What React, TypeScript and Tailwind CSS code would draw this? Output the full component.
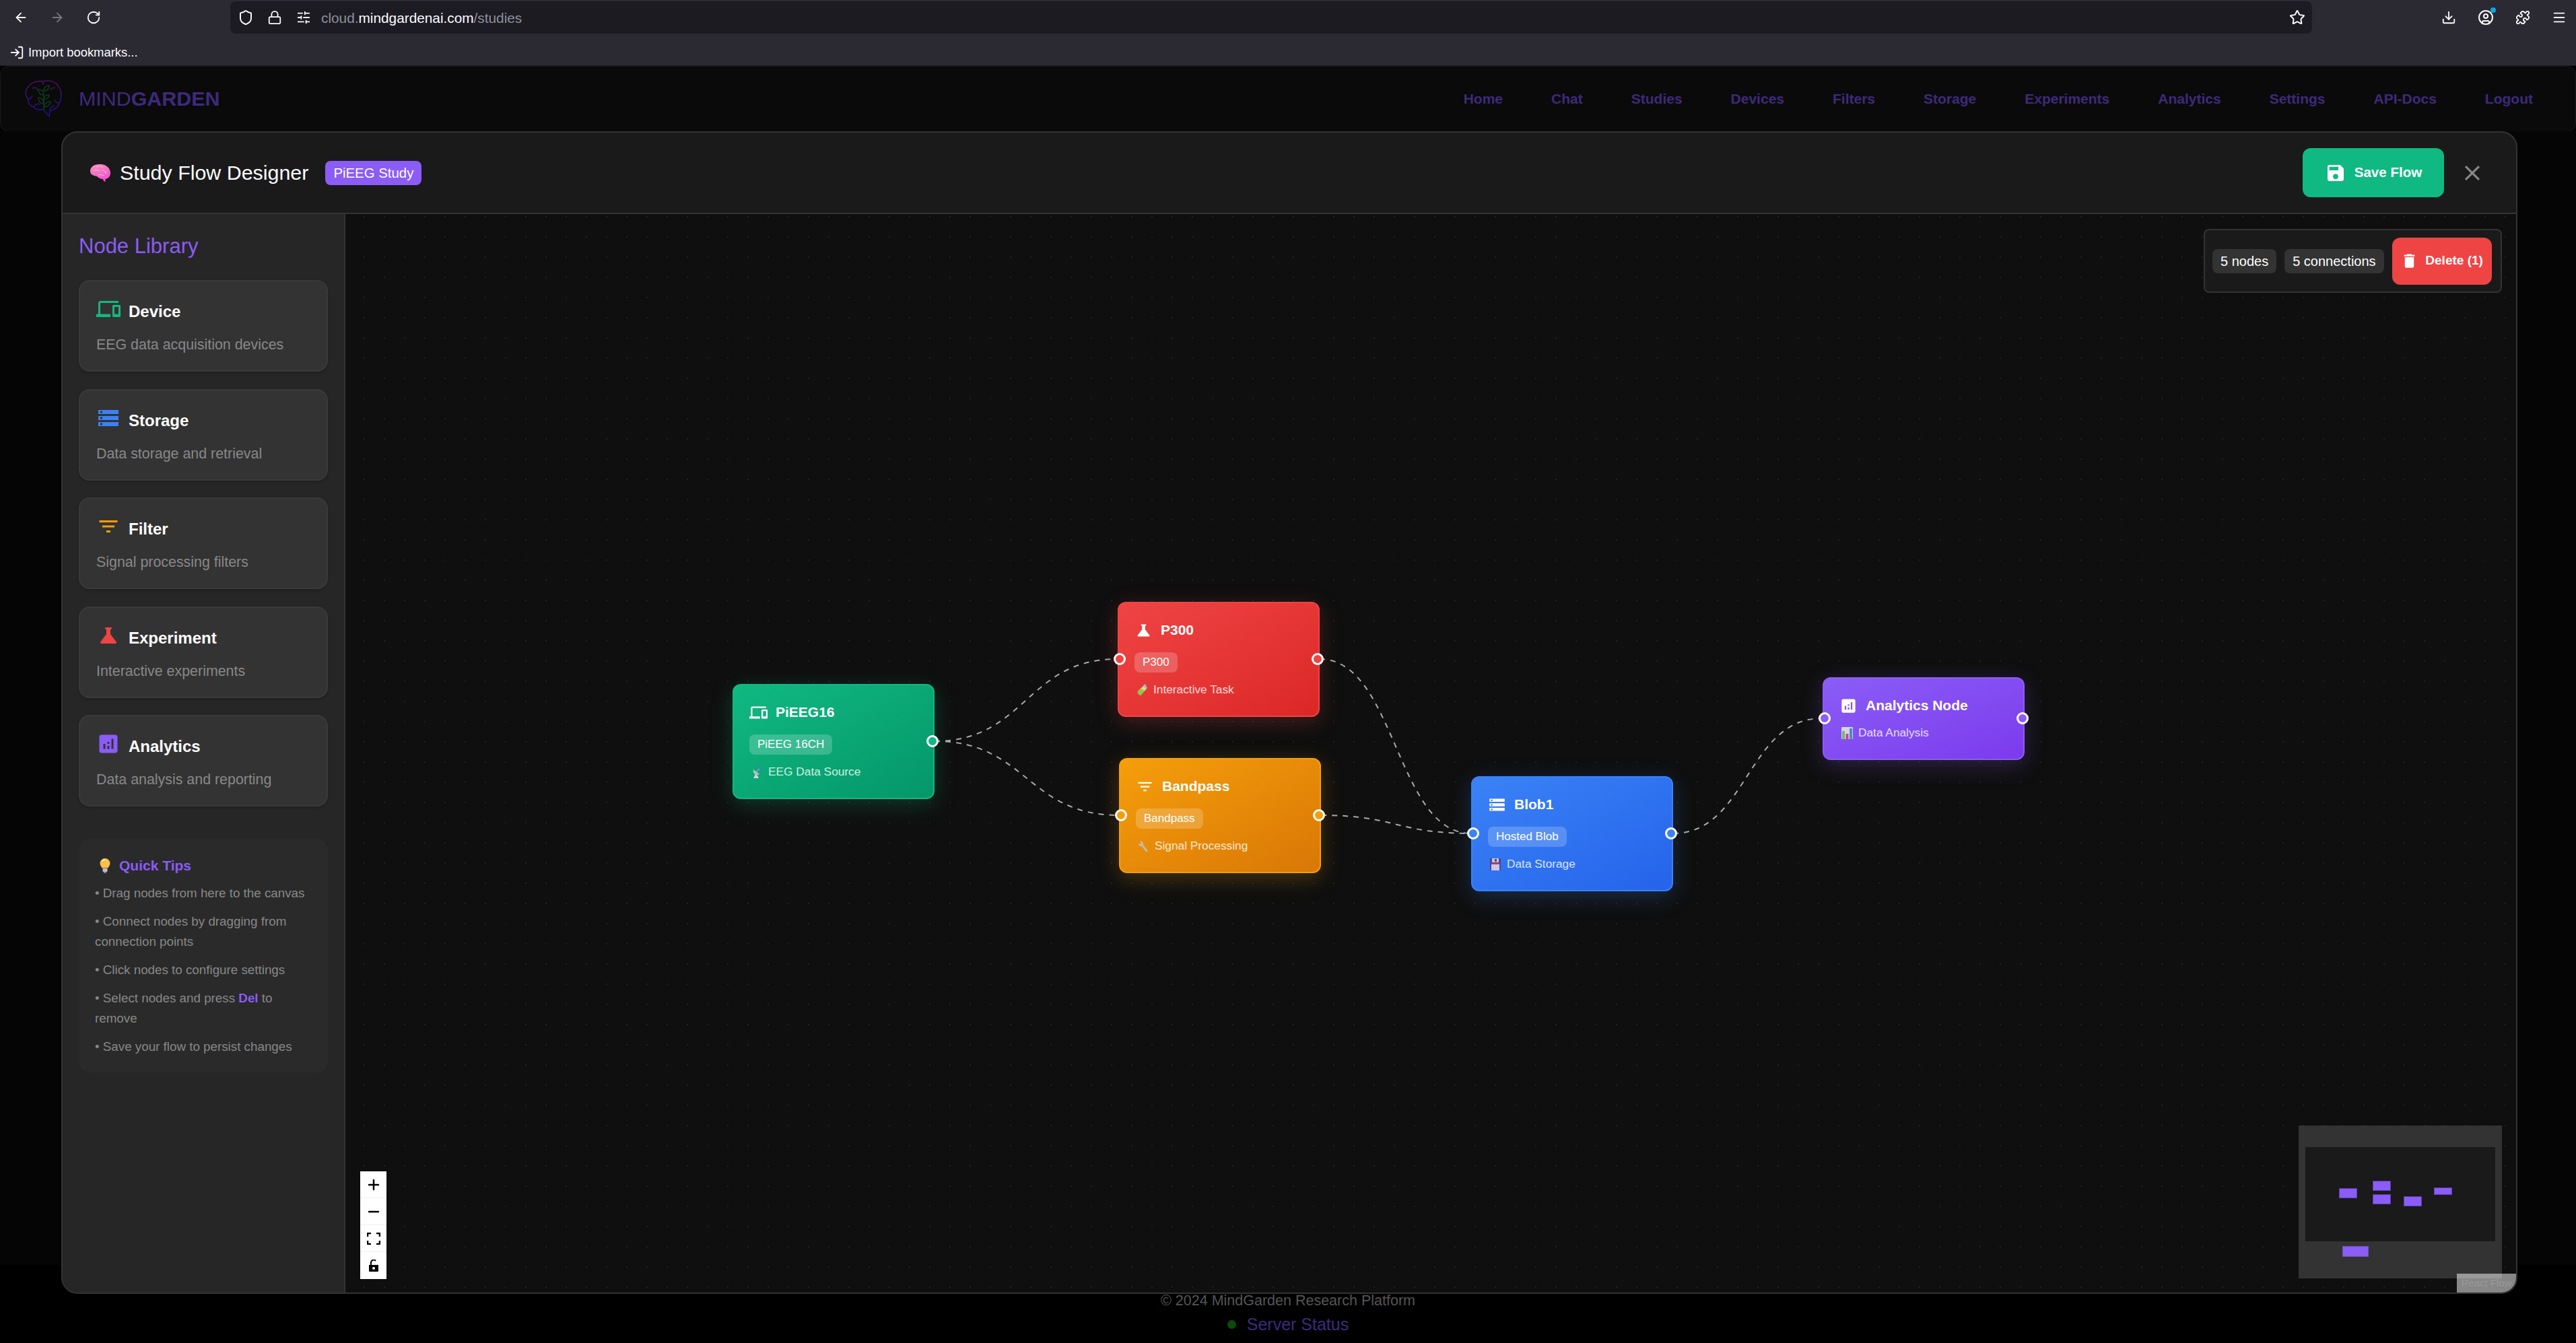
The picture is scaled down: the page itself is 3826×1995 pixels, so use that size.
import { ArrowLeft, ArrowRight, RotateCw, Shield, Lock, Star, Download, CircleUser, Puzzle, Menu, LogIn, SlidersHorizontal, Plus, Minus } from "lucide-react";
import type { ReactNode } from "react";

// Material icon paths
const ICONS = {
  device: "M4 6h18V4H4c-1.1 0-2 .9-2 2v11H0v3h14v-3H4V6zm19 2h-6c-.55 0-1 .45-1 1v10c0 .55.45 1 1 1h6c.55 0 1-.45 1-1V9c0-.55-.45-1-1-1zm-1 9h-4v-7h4v7z",
  storage: "M2 20h20v-4H2v4zm2-3h2v2H4v-2zM2 4v4h20V4H2zm4 3H4V5h2v2zm-4 7h20v-4H2v4zm2-3h2v2H4v-2z",
  filter: "M10 18h4v-2h-4v2zM3 6v2h18V6H3zm3 7h12v-2H6v2z",
  science: "M19.8 18.4 14 10.67V6.5l1.35-1.69c.26-.33.03-.81-.39-.81H9.04c-.42 0-.65.48-.39.81L10 6.5v4.17L4.2 18.4c-.49.66-.02 1.6.8 1.6h14c.82 0 1.29-.94.8-1.6z",
  analytics: "M19 3H5c-1.1 0-2 .9-2 2v14c0 1.1.9 2 2 2h14c1.1 0 2-.9 2-2V5c0-1.1-.9-2-2-2zM9 17H7v-5h2v5zm4 0h-2v-3h2v3zm0-5h-2v-2h2v2zm4 5h-2V7h2v10z",
  save: "M17 3H5c-1.11 0-2 .9-2 2v14c0 1.1.89 2 2 2h14c1.1 0 2-.9 2-2V7l-4-4zm-5 16c-1.66 0-3-1.34-3-3s1.34-3 3-3 3 1.34 3 3-1.34 3-3 3zm3-10H5V5h10v4z",
  trash: "M6 19c0 1.1.9 2 2 2h8c1.1 0 2-.9 2-2V7H6v12zM19 4h-3.5l-1-1h-5l-1 1H5v2h14V4z",
  close: "M19 6.41 17.59 5 12 10.59 6.41 5 5 6.41 10.59 12 5 17.59 6.41 19 12 13.41 17.59 19 19 17.59 13.41 12z",
};

function MuiIcon({ d, className }: { d: string; className: string }) {
  return (
    <svg viewBox="0 0 24 24" fill="currentColor" className={`shrink-0 ${className}`}>
      <path d={d} />
    </svg>
  );
}

function BrainEmoji() {
  return (
    <svg viewBox="0 0 30 26" className="w-[30px] h-[26px] shrink-0">
      <defs>
        <linearGradient id="brainFill" x1="0.2" y1="0" x2="0.7" y2="1">
          <stop offset="0" stopColor="#f78fc0" />
          <stop offset="1" stopColor="#f04fd0" />
        </linearGradient>
      </defs>
      <path d="M13 0c9-1 17 5 17 13 0 5-3 8-7 9l-1 1 1 3-3-1-1-3c-4 0-7-2-9-4C4 17 0 15 0 10 0 4 6 0 13 0z" fill="url(#brainFill)" />
      <path d="M9 4c3-2 8-1 10 1M5 10c3-2 7-2 9 1M17 9c3 0 6 2 7 5M12 16c3-1 6-1 8 1" fill="none" stroke="#f9a8d4" strokeWidth="1.2" />
    </svg>
  );
}

function BulbEmoji() {
  return (
    <svg viewBox="0 0 16 22" className="w-[16px] h-[22px] shrink-0">
      <path d="M8 0a7.5 7.5 0 0 0-7.5 7.5c0 3 2 4.5 3 7h9c1-2.5 3-4 3-7A7.5 7.5 0 0 0 8 0z" fill="#fbbf4a" />
      <path d="M4 4a5 5 0 0 1 4-2" stroke="#fff3c4" strokeWidth="1.5" fill="none" />
      <rect x="4.5" y="15" width="7" height="5" rx="1" fill="#c9b8d8" />
      <rect x="6" y="20" width="4" height="2" fill="#8a7a9a" />
    </svg>
  );
}

function SatelliteEmoji() {
  return (
    <svg viewBox="0 0 16 17" className="w-[16px] h-[17px] shrink-0">
      <path d="M3 4c-1 4 1 8 6 8 1 0 2 0 3-1z" fill="#b9bdc2" />
      <path d="M3 17l3-6 3 2 2 4z" fill="#d3d6da" />
      <path d="M7 8l5-5" stroke="#8fa3b0" strokeWidth="1.5" />
      <path d="M10 1c2 0 5 2 5 5" fill="none" stroke="#2f86c9" strokeWidth="2.2" />
    </svg>
  );
}

function TubeEmoji() {
  return (
    <svg viewBox="0 0 17 18" className="w-[17px] h-[18px] shrink-0">
      <path d="M10 3l5 4-8 9c-2 2-6-2-5-5z" fill="#d5e08f" />
      <path d="M7 7l5 3-5 6c-2 2-6-2-5-5z" fill="#8fc83f" />
      <path d="M10 3l5 4 1-1-3-6-3 2z" fill="#a9b7d6" />
    </svg>
  );
}

function WrenchEmoji() {
  return (
    <svg viewBox="0 0 16 18" className="w-[16px] h-[18px] shrink-0">
      <path d="M3 1l2 3-1 2-3-1c0 3 2 5 5 4l6 8c2 1 3-1 2-2L8 7c1-3-2-6-5-6z" fill="#c4bdb0" />
    </svg>
  );
}

function FloppyEmoji() {
  return (
    <svg viewBox="0 0 16 18" className="w-[16px] h-[18px] shrink-0">
      <rect x="0" y="0" width="16" height="18" rx="1.5" fill="#4c4a8c" />
      <rect x="3" y="0" width="10" height="6" fill="#c9c6d8" />
      <rect x="7" y="1" width="3" height="4" fill="#4c4a8c" />
      <rect x="2" y="7" width="12" height="2" fill="#c2386c" />
      <rect x="2" y="9" width="12" height="9" fill="#cfc6e6" />
    </svg>
  );
}

function ChartEmoji() {
  return (
    <svg viewBox="0 0 17 18" className="w-[17px] h-[18px] shrink-0">
      <rect width="17" height="18" rx="1" fill="#d8d4e2" />
      <rect x="1" y="6" width="4" height="12" fill="#6dbb7a" />
      <rect x="6.5" y="10" width="4" height="8" fill="#d9417e" />
      <rect x="12" y="2" width="4" height="16" fill="#3f8fd0" />
    </svg>
  );
}

function BrainLogo() {
  return (
    <svg viewBox="0 0 56 56" fill="none" className="w-[56px] h-[56px] shrink-0">
      <defs>
        <linearGradient id="logoStroke" x1="0" y1="0" x2="0" y2="1">
          <stop offset="0" stopColor="#4a0f63" />
          <stop offset="1" stopColor="#1e1080" />
        </linearGradient>
      </defs>
      <g stroke="url(#logoStroke)" strokeWidth="1.6">
        <path d="M37 54 29 44C22 44 16 44 14 40 8 38 5 33 6 28 1 24 1 15 6 10 9 4 20 0 28 2 38-1 48 3 51 10 56 15 56 28 52 34 51 40 44 44 38 46z" />
        <path d="M28 2v5M12 12c4-2 8 0 9 4M6 28c3 0 5-2 6-5M14 40c2-4 6-6 10-4M46 12c-3-1-6 0-7 3M52 34c-3 0-6-2-7-5M38 46c0-4 2-7 7-8" />
      </g>
      <path d="M29 44V22M29 22c-5 0-8-3-8-8 5 0 8 3 8 8zM29 16c0-5 3-8 8-8 0 5-3 8-8 8zM29 35c-5 0-8-3-8-9 5 0 8 4 8 9zM29 28c0-4 3-6 8-6 0 4-3 6-8 6zM29 40c1-5 5-8 10-8 0 5-5 8-10 8z" stroke="#0c3a22" strokeWidth="1.6" />
    </svg>
  );
}

function BrowserChrome() {
  return (
    <div className="h-[98px] bg-[#2b2a33] border-b border-[#1a1a1f] flex flex-col text-[#fbfbfe]">
      <div className="h-[50px] flex items-center pt-[2px]">
        <div className="flex items-center w-[342px] pl-[20px] gap-[32px]">
          <ArrowLeft className="w-[22px] h-[22px]" />
          <ArrowRight className="w-[22px] h-[22px] text-[#77767c]" />
          <RotateCw className="w-[22px] h-[22px]" />
        </div>
        <div className="w-[3092px] h-[48px] bg-[#1c1b22] rounded-lg flex items-center pl-[11px] pr-[8px]">
          <Shield className="w-[24px] h-[24px] shrink-0" />
          <Lock className="w-[22px] h-[22px] shrink-0 ml-[20px]" />
          <SlidersHorizontal className="w-[22px] h-[22px] shrink-0 ml-[21px]" />
          <span className="text-[20.8px] ml-[15px] mt-[2px] text-[#8f8f9d]">cloud.<span className="text-[#fbfbfe]">mindgardenai.com</span>/studies</span>
          <Star className="w-[24px] h-[24px] ml-auto mr-[2px]" />
        </div>
        <div className="flex items-center ml-[192px] gap-[32px]">
          <Download className="w-[22px] h-[22px]" />
          <div className="relative">
            <CircleUser className="w-[24px] h-[24px]" />
            <span className="absolute -top-[3px] -right-[3px] w-[8px] h-[8px] rounded-full bg-[#0ea5e9]" />
          </div>
          <Puzzle className="w-[22px] h-[22px]" />
          <Menu className="w-[22px] h-[22px]" />
        </div>
      </div>
      <div className="h-[47px] flex items-center pl-[14px] gap-[6px] text-[18.4px] pt-[8px]">
        <LogIn className="w-[22px] h-[22px]" />
        <span>Import bookmarks...</span>
      </div>
    </div>
  );
}

function NavBar() {
  const links = ["Home", "Chat", "Studies", "Devices", "Filters", "Storage", "Experiments", "Analytics", "Settings", "API-Docs", "Logout"];
  return (
    <div className="h-[98px] bg-[#0a0a0a] border border-[#171717] rounded-[12px] flex items-center pl-[35px] pr-[63px]">
      <BrainLogo />
      <span className="ml-[25px] text-[30.4px] text-[#3d2a7d]">MIND<span className="font-bold">GARDEN</span></span>
      <div className="ml-auto flex items-center gap-[72px]">
        {links.map((l) => (
          <span key={l} className="text-[21px] font-bold text-[#3d2a7d]">{l}</span>
        ))}
      </div>
    </div>
  );
}

const LIBRARY = [
  { icon: ICONS.device, color: "text-[#10b981]", title: "Device", desc: "EEG data acquisition devices" },
  { icon: ICONS.storage, color: "text-[#3b82f6]", title: "Storage", desc: "Data storage and retrieval" },
  { icon: ICONS.filter, color: "text-[#f59e0b]", title: "Filter", desc: "Signal processing filters" },
  { icon: ICONS.science, color: "text-[#ef4444]", title: "Experiment", desc: "Interactive experiments" },
  { icon: ICONS.analytics, color: "text-[#8b5cf6]", title: "Analytics", desc: "Data analysis and reporting" },
];

function Sidebar() {
  return (
    <div className="w-[420px] shrink-0 bg-[#262626] border-r-2 border-[#333] px-[24px] pt-[29px]">
      <h3 className="text-[31px] leading-[38px] text-[#8b5cf6]">Node Library</h3>
      <div className="mt-[31px] flex flex-col gap-[25.5px]">
        {LIBRARY.map((n) => (
          <div key={n.title} className="h-[136px] bg-[#333] border-2 border-[#3a3a3a] rounded-[16px] px-[24px] pt-[19px] shadow-[0_2px_4px_rgba(0,0,0,0.2)]">
            <div className="flex items-center gap-[12px] h-[44px]">
              <MuiIcon d={n.icon} className={`w-[36px] h-[36px] ${n.color}`} />
              <span className="text-[24px] font-bold text-white translate-y-[4px]">{n.title}</span>
            </div>
            <p className="mt-[17px] text-[21.4px] leading-[28px] text-[#888] whitespace-nowrap">{n.desc}</p>
          </div>
        ))}
      </div>
      <div className="mt-[48px] h-[347px] bg-[#2a2a2a] rounded-[16px] px-[24px] pt-[24px] text-[18.8px] text-[#888]">
        <div className="flex items-center gap-[13px] pl-[7px] h-[32px]">
          <BulbEmoji />
          <span className="text-[21px] font-bold text-[#8b5cf6]">Quick Tips</span>
        </div>
        <div className="mt-[10px] flex flex-col gap-[12px] leading-[30px]">
          <p>• Drag nodes from here to the canvas</p>
          <p>• Connect nodes by dragging from connection points</p>
          <p>• Click nodes to configure settings</p>
          <p>• Select nodes and press <span className="font-bold text-[#8b5cf6]">Del</span> to remove</p>
          <p>• Save your flow to persist changes</p>
        </div>
      </div>
    </div>
  );
}

function FlowNode({ tone, icon, title, chip, emoji, sub, handle }: { tone: string; icon: string; title: string; chip?: string; emoji: ReactNode; sub: string; handle: string }) {
  return (
    <div className={`relative w-[300px] rounded-[12px] border-2 px-[23px] pt-[23px] ${tone}`}>
      <div className="flex items-center gap-[12px] h-[34px]">
        <MuiIcon d={icon} className="w-[27px] h-[27px] text-white" />
        <span className="text-[21px] font-bold text-white">{title}</span>
      </div>
      {chip && <span className="block w-fit mt-[16px] h-[30px] leading-[30px] px-[12px] rounded-[8px] bg-white/20 text-[17px] text-white">{chip}</span>}
      <div className={`flex items-center h-[20px] text-[17.3px] text-white/80 ${chip ? "mt-[16px]" : "mt-[14px]"}`}>
        <span className="flex w-[28px] pl-[3px]">{emoji}</span>
        <span>{sub}</span>
      </div>
      <span className={`absolute -right-[8px] w-[18px] h-[18px] rounded-full border-[3px] border-white ${handle}`} />
    </div>
  );
}

function Handle({ className }: { className: string }) {
  return <span className={`absolute -left-[6px] w-[18px] h-[18px] rounded-full border-[3px] border-white ${className}`} />;
}

function Canvas() {
  return (
    <div className="relative flex-1 bg-[#0f0f0f] bg-[radial-gradient(#222_1px,transparent_1px)] bg-[size:30px_30px] bg-[position:13px_-11px] overflow-hidden">
      <svg viewBox="0 0 3225 1603" className="absolute left-0 top-0 w-[3225px] h-[1603px]" fill="none" stroke="#aaa" strokeWidth="2" strokeDasharray="8 8">
        <path d="M875 783 C1011 783 1011 661 1147 661" />
        <path d="M875 783 C1012 783 1012 893 1149 893" />
        <path d="M1447 661 C1560 661 1560 920 1672 920" />
        <path d="M1449 893 C1560 893 1560 920 1672 920" />
        <path d="M1972 920 C2082 920 2082 749 2193 749" />
      </svg>

      <div className="absolute left-[575px] top-[698px]">
        <FlowNode tone="h-[171px] border-[#10b981] bg-linear-to-br from-[#10b981] to-[#059669] shadow-[0_8px_32px_rgba(16,185,129,0.25)]" icon={ICONS.device} title="PiEEG16" chip="PiEEG 16CH" emoji={<SatelliteEmoji />} sub="EEG Data Source" handle="top-[74px] bg-[#10b981]" />
      </div>
      <div className="absolute left-[1147px] top-[576px]">
        <FlowNode tone="h-[171px] border-[#ef4444] bg-linear-to-br from-[#ef4444] to-[#dc2626] shadow-[0_8px_32px_rgba(239,68,68,0.25)]" icon={ICONS.science} title="P300" chip="P300" emoji={<TubeEmoji />} sub="Interactive Task" handle="top-[74px] bg-[#ef4444]" />
        <Handle className="top-[76px] bg-[#ef4444]" />
      </div>
      <div className="absolute left-[1149px] top-[808px]">
        <FlowNode tone="h-[171px] border-[#f59e0b] bg-linear-to-br from-[#f59e0b] to-[#d97706] shadow-[0_8px_32px_rgba(245,158,11,0.25)]" icon={ICONS.filter} title="Bandpass" chip="Bandpass" emoji={<WrenchEmoji />} sub="Signal Processing" handle="top-[74px] bg-[#f59e0b]" />
        <Handle className="top-[76px] bg-[#f59e0b]" />
      </div>
      <div className="absolute left-[1672px] top-[835px]">
        <FlowNode tone="h-[171px] border-[#3b82f6] bg-linear-to-br from-[#3b82f6] to-[#2563eb] shadow-[0_8px_32px_rgba(59,130,246,0.25)]" icon={ICONS.storage} title="Blob1" chip="Hosted Blob" emoji={<FloppyEmoji />} sub="Data Storage" handle="top-[74px] bg-[#3b82f6]" />
        <Handle className="top-[76px] bg-[#3b82f6]" />
      </div>
      <div className="absolute left-[2194px] top-[688px]">
        <FlowNode tone="h-[123px] border-[#8b5cf6] bg-linear-to-br from-[#8b5cf6] to-[#7c3aed] shadow-[0_8px_32px_rgba(139,92,246,0.25)]" icon={ICONS.analytics} title="Analytics Node" emoji={<ChartEmoji />} sub="Data Analysis" handle="top-[50px] bg-[#8b5cf6]" />
        <Handle className="top-[52px] bg-[#8b5cf6]" />
      </div>

      {/* stats */}
      <div className="absolute left-[2760px] top-[22px] w-[443px] h-[95px] bg-[#1a1a1a] border-2 border-[#333] rounded-[8px] flex items-center pl-[11px] gap-[12px] text-[20px] text-white">
        <span className="h-[36px] leading-[36px] px-[12px] bg-[#333] rounded-[8px] whitespace-nowrap">5 nodes</span>
        <span className="h-[36px] leading-[36px] px-[12px] bg-[#333] rounded-[8px] whitespace-nowrap">5 connections</span>
        <button className="h-[70px] w-[148px] shrink-0 bg-[#ef4444] rounded-[12px] font-bold text-[19px] flex items-center justify-center gap-[10px] whitespace-nowrap">
          <MuiIcon d={ICONS.trash} className="w-[27px] h-[27px]" />
          Delete (1)
        </button>
      </div>

      {/* zoom controls */}
      <div className="absolute left-[22px] top-[1422px] w-[39px] bg-white text-black flex flex-col">
        <div className="h-[40px] flex items-center justify-center border-b border-[#eee]"><Plus className="w-[24px] h-[24px]" strokeWidth={2.5} /></div>
        <div className="h-[40px] flex items-center justify-center border-b border-[#eee]"><Minus className="w-[24px] h-[24px]" strokeWidth={2.5} /></div>
        <div className="h-[40px] flex items-center justify-center border-b border-[#eee]">
          <svg viewBox="0 0 20 18" className="w-[20px] h-[18px]" fill="none" stroke="#000" strokeWidth="2.5"><path d="M1 6V1h5M14 1h5v5M19 12v5h-5M6 17H1v-5" /></svg>
        </div>
        <div className="h-[40px] flex items-center justify-center">
          <svg viewBox="0 0 16 18" className="w-[16px] h-[18px]"><path d="M1 8h14v9a1 1 0 0 1-1 1H2a1 1 0 0 1-1-1z" fill="#000" /><path d="M4 8V4a4 4 0 0 1 7-2" fill="none" stroke="#000" strokeWidth="2" /><circle cx="8" cy="13" r="2" fill="#fff" /></svg>
        </div>
      </div>

      {/* minimap */}
      <div className="absolute left-[2901px] top-[1354px] w-[302px] h-[227px] bg-[#333]">
        <div className="absolute left-[10px] top-[32px] w-[282px] h-[140px] bg-[#1a1a1a]" />
        <div className="absolute left-[60px] top-[93px] w-[27px] h-[15px] bg-[#8b5cf6] border border-[#5b3fa8]" />
        <div className="absolute left-[110px] top-[82px] w-[27px] h-[15px] bg-[#8b5cf6] border border-[#5b3fa8]" />
        <div className="absolute left-[110px] top-[102px] w-[27px] h-[15px] bg-[#8b5cf6] border border-[#5b3fa8]" />
        <div className="absolute left-[156px] top-[105px] w-[27px] h-[15px] bg-[#8b5cf6] border border-[#5b3fa8]" />
        <div className="absolute left-[201px] top-[92px] w-[27px] h-[11px] bg-[#8b5cf6] border border-[#5b3fa8]" />
        <div className="absolute left-[65px] top-[179px] w-[39px] h-[16px] bg-[#8b5cf6] border border-[#6d4fc4]" />
      </div>
      <div className="absolute right-0 bottom-0 w-[88px] h-[28px] bg-white/50 flex items-center justify-center text-[15px] text-[#999]">React Flow</div>
    </div>
  );
}

function Modal() {
  return (
    <div className="h-[1727px] bg-[#1a1a1a] border-2 border-[#333] rounded-[24px] overflow-hidden flex flex-col">
      <div className="h-[121px] shrink-0 border-b-2 border-[#333] flex items-center pl-[41px] pr-[46px]">
        <BrainEmoji />
        <h2 className="ml-[14px] text-[30.4px] text-white">Study Flow Designer</h2>
        <span className="ml-[25px] h-[36px] leading-[36px] px-[12px] bg-[#8b5cf6] rounded-[8px] text-[20.4px] text-white">PiEEG Study</span>
        <button className="ml-auto w-[210px] h-[73px] bg-[#10b981] rounded-[12px] flex items-center justify-center gap-[12px] text-[20.6px] font-bold text-white">
          <MuiIcon d={ICONS.save} className="w-[32px] h-[32px]" />
          Save Flow
        </button>
        <MuiIcon d={ICONS.close} className="w-[38px] h-[38px] ml-[23px] text-[#888]" />
      </div>
      <div className="flex flex-1 min-h-0">
        <Sidebar />
        <Canvas />
      </div>
    </div>
  );
}

export default function App() {
  return (
    <div className="w-[3826px] h-[1995px] bg-black font-['Liberation_Sans',Arial,sans-serif] overflow-hidden">
      <BrowserChrome />
      <NavBar />
      <div className="h-[1684px] bg-[#050505] pl-[91px] pr-[87px] -mt-[1px] relative z-10">
        <Modal />
      </div>
      <div className="h-[115px] pt-[42px] flex flex-col items-center">
        <p className="text-[21.5px] leading-[26px] text-[#555] mt-[-2px]">© 2024 MindGarden Research Platform</p>
        <div className="mt-[6px] flex items-center gap-[16px] text-[25px] leading-[32px] text-[#3d2a7d]">
          <span className="w-[13px] h-[13px] rounded-full bg-[#0b4a0b]" />
          Server Status
        </div>
      </div>
    </div>
  );
}
